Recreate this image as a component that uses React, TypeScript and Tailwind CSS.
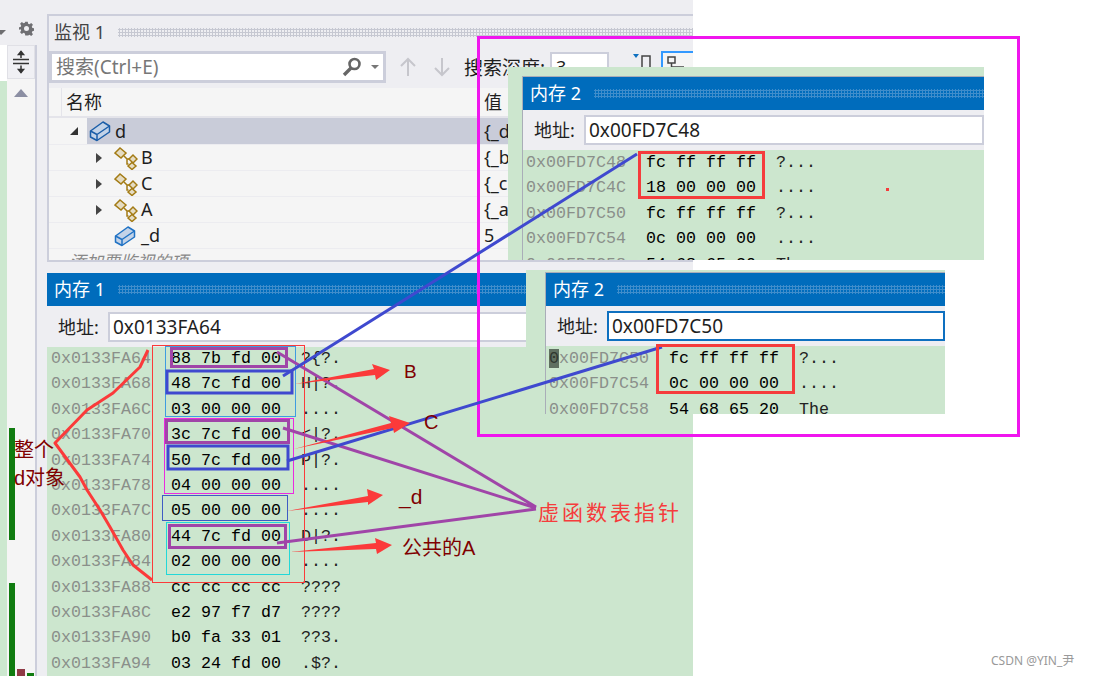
const ui = "font-['Noto_Sans','Noto_Sans_CJK_SC',sans-serif]"
const mono = "font-['Liberation_Mono','Noto_Sans_CJK_SC',monospace]"
const label = "font-['Liberation_Sans','Noto_Sans_CJK_SC',sans-serif]"

const watchRows = [
  { name: "B", value: "{_b", arrow: true },
  { name: "C", value: "{_c=", arrow: true },
  { name: "A", value: "{_a=", arrow: true },
  { name: "_d", value: "5", arrow: false },
]

const mem1 = [
  ["0x0133FA64", "88 7b fd 00", "?{?."],
  ["0x0133FA68", "48 7c fd 00", "H|?."],
  ["0x0133FA6C", "03 00 00 00", "...."],
  ["0x0133FA70", "3c 7c fd 00", "<|?."],
  ["0x0133FA74", "50 7c fd 00", "P|?."],
  ["0x0133FA78", "04 00 00 00", "...."],
  ["0x0133FA7C", "05 00 00 00", "...."],
  ["0x0133FA80", "44 7c fd 00", "D|?."],
  ["0x0133FA84", "02 00 00 00", "...."],
  ["0x0133FA88", "cc cc cc cc", "????"],
  ["0x0133FA8C", "e2 97 f7 d7", "????"],
  ["0x0133FA90", "b0 fa 33 01", "??3."],
  ["0x0133FA94", "03 24 fd 00", ".$?."],
]

const mem2a = [
  ["0x00FD7C48", "fc ff ff ff", "?..."],
  ["0x00FD7C4C", "18 00 00 00", "...."],
  ["0x00FD7C50", "fc ff ff ff", "?..."],
  ["0x00FD7C54", "0c 00 00 00", "...."],
  ["0x00FD7C58", "54 68 65 20", "The "],
]

const mem2b = [
  ["0x00FD7C50", "fc ff ff ff", "?..."],
  ["0x00FD7C54", "0c 00 00 00", "...."],
  ["0x00FD7C58", "54 68 65 20", "The "],
]

function CubeIcon({ dark }: { dark?: boolean }) {
  const stroke = dark ? "#1b5ea8" : "#1f72c4"
  return (
    <svg width="22" height="22" viewBox="0 0 22 22" fill="none" stroke={stroke} strokeWidth="1.5" strokeLinejoin="round">
      <path d="M1.5 11 L14 2 L20.5 6 L20.5 12 L8 20.5 L1.5 17 Z" fill="#c3d3e8" />
      <path d="M1.5 11 L8 14.5 L20.5 6 M8 14.5 L8 20.5" />
    </svg>
  )
}

function ClassIcon() {
  return (
    <svg width="24" height="24" viewBox="0 0 24 24" fill="#e5dcc3" stroke="#a37b14" strokeWidth="1.5">
      <path d="M10 10 L13 13 H15 M13 13 V18 H14.5" fill="none" />
      <path d="M1 7 L6 2 L12 7 L7 12 Z" />
      <path d="M15 13 L19 9 L23 13 L19 17 Z" />
      <path d="M14 20 L18 16.5 L22 20 L18 23.5 Z" />
    </svg>
  )
}

function Gripper({ dark }: { dark?: boolean }) {
  return (
    <div
      className={`h-[9px] flex-1 bg-[length:3px_3px] ${
        dark
          ? "bg-[radial-gradient(#3f8dcb_1px,transparent_1.2px)]"
          : "bg-[radial-gradient(#c6c8d2_1px,transparent_1.2px)]"
      }`}
    />
  )
}

function MemRows({ rows, mark }: { rows: string[][]; mark?: boolean }) {
  return (
    <div className={`${mono} text-[16.67px] leading-[25.4px] whitespace-pre`}>
      {rows.map((r, i) => (
        <div key={r[0]} className="flex h-[25.4px]">
          <span className="text-[#8a8f8a]">
            {mark && i === 0 ? <span className="bg-[#5f6f60] text-[#303830]">0</span> : r[0][0]}
            {r[0].slice(1)}
          </span>
          <span className="ml-[20px] text-black">{r[1]}</span>
          <span className="ml-[20px] text-[#222]">{r[2]}</span>
        </div>
      ))}
    </div>
  )
}

function AddressBar({ value, focused }: { value: string; focused?: boolean }) {
  return (
    <div className="flex h-[40px] items-center bg-[#eeeef2] pl-[11px]">
      <span className="w-[50px] text-[18px] text-[#1e1e1e]">地址:</span>
      <div
        className={`flex h-[30px] flex-1 items-center border-2 bg-white px-[3px] text-[19px] text-[#1e1e1e] ${
          focused ? "border-[#0e70c0]" : "border-[#cccedb]"
        }`}
      >
        {value}
      </div>
    </div>
  )
}

function TitleBar({ title }: { title: string }) {
  return (
    <div className="flex h-[33px] items-center gap-[13px] bg-[#006cbc] pl-[7px] text-[18px] text-white">
      <span>{title}</span>
      <Gripper dark />
    </div>
  )
}

function Annotations() {
  return (
    <svg className="absolute inset-0" width="1093" height="676" fill="none">
      {/* outer selection frame */}
      <rect x="478.5" y="37.5" width="540" height="398" stroke="#f015ee" strokeWidth="3" />

      {/* region boxes */}
      <rect x="152.5" y="345.5" width="152" height="237" stroke="#fb3a3a" />
      <rect x="165.5" y="346.5" width="130" height="70" stroke="#3f9ce0" />
      <rect x="164.5" y="418.5" width="129" height="75" stroke="#ea2be0" />
      <rect x="162.5" y="495.5" width="125" height="25" stroke="#3f5cc4" />
      <rect x="166.5" y="522.5" width="123" height="52" stroke="#22d8d8" />

      <g stroke="#a045a8" strokeWidth="3">
        <rect x="171.5" y="348.5" width="115" height="18" />
        <rect x="166.5" y="420.5" width="122" height="22" />
        <rect x="169.5" y="525.5" width="116" height="22" />
        <path d="M277 352 L536 507 M283 428 L536 508 M277 543 L536 509" />
      </g>
      <g stroke="#3f49cf" strokeWidth="3">
        <rect x="167" y="371" width="125" height="22" />
        <rect x="168" y="446" width="120" height="23" />
        <path d="M283 376 L637 154 M287 461 L662 347" />
      </g>

      {/* brace */}
      <path
        d="M148 350 L140 367 L113 393 L87 410 L55 443 L80 477 L87 490 L100 510 L110 527 L123 550 L133 565 L152 580"
        stroke="#fb3a3a"
        strokeWidth="3"
        strokeLinejoin="round"
      />

      {/* arrows */}
      <g fill="#fb3a3a">
        <path d="M295 384 L374 369 L372 364 L390 370 L376 380 L375 375 Z" />
        <path d="M294 449 L391 423 L389 416 L410 423 L394 433 L393 428 Z" />
        <path d="M287 511 L368 496 L367 489 L383 495 L368 505 L368 502 Z" />
        <path d="M290 552 L376 543 L375 538 L392 545 L377 554 L376 549 Z" />
      </g>

      {/* value boxes on the pasted windows */}
      <rect x="639.5" y="152.5" width="124" height="45" stroke="#f53c3c" strokeWidth="3" />
      <rect x="657.5" y="345.5" width="136" height="47" stroke="#f53c3c" strokeWidth="3" />
      <rect x="886" y="188" width="3" height="3" fill="#f53c3c" />
    </svg>
  )
}

export default function App() {
  return (
    <div className={`relative h-[676px] w-[1093px] overflow-hidden bg-white ${ui}`}>
      <div className="flex h-[676px] w-[693px] bg-[#eeeef2]">
        {/* left strip */}
        <div className="relative w-[47px] shrink-0">
          <span className="absolute left-[-4px] top-[30px] h-0 w-0 border-x-[5px] border-t-[5px] border-x-transparent border-t-[#6d6d70]" />
          <svg className="absolute left-[19px] top-[21px]" width="15" height="15" viewBox="0 0 24 24" fill="#6f6f73">
            <path d="M10 1h4l.6 3.2 2.2.9 2.7-1.8 2.8 2.8-1.8 2.7.9 2.2 3.2.6v4l-3.2.6-.9 2.2 1.8 2.7-2.8 2.8-2.7-1.8-2.2.9L14 23h-4l-.6-3.2-2.2-.9-2.7 1.8-2.8-2.8 1.8-2.7-.9-2.2L-.6 14v-4l3.2-.6.9-2.2L1.7 4.5l2.8-2.8 2.7 1.8 2.2-.9zM12 8a4 4 0 100 8 4 4 0 000-8z" />
          </svg>
          <div className="absolute bottom-0 left-0 top-[45px] flex w-[37px] border-r-2 border-[#cccedb]">
            <div className="flex w-[7px] flex-col">
              <div className="h-[36px] bg-white" />
              <div className="flex-1 bg-[#cce8cf]" />
            </div>
            <div className="relative flex-1 bg-[#f5f5f5]">
              <div className="flex h-[34px] items-center justify-center border border-[#e0e0e6] bg-[#f0f0f4]">
                <svg width="18" height="24" viewBox="0 0 18 24" stroke="#333" strokeWidth="1.5" fill="#333">
                  <path d="M1 9.5H17M1 13.5H17" />
                  <path d="M9 1.5V8M9 15.5V22.5" />
                  <path d="M6.5 4.5L9 1.5L11.5 4.5ZM6.5 19.5L9 22.5L11.5 19.5Z" />
                </svg>
              </div>
              <span className="absolute left-[7px] top-[44px] h-0 w-0 border-x-[7px] border-b-[8px] border-x-transparent border-b-[#8c8fa3]" />
              <div className="absolute left-[2px] top-[383px] h-[112px] w-[6px] bg-[#107c10]" />
              <div className="absolute left-[2px] top-[538px] h-[93px] w-[6px] bg-[#107c10]" />
              <div className="absolute left-[10px] top-[624px] h-[7px] w-[8px] bg-[#8f3a45]" />
              <div className="absolute left-[20px] top-[628px] h-[3px] w-[7px] bg-[#107c10]" />
            </div>
          </div>
        </div>

        <div className="flex min-w-0 flex-1 flex-col">
          {/* 监视 1 */}
          <div className="mt-[14px] h-[248px] shrink-0 overflow-hidden border-2 border-r-0 border-[#cccedb]">
            <div className="flex h-[33px] items-center gap-[13px] pl-[5px] text-[18px] text-[#444]">
              <span>监视 1</span>
              <Gripper />
            </div>
            <div className="flex h-[39px] items-start pt-[2px]">
              <div className="flex h-[32px] w-[337px] shrink-0 items-center border-[3px] border-[#cccedb] bg-white px-[4px] text-[19px] text-[#777]">
                <span className="flex-1">搜索(Ctrl+E)</span>
                <svg width="20" height="20" viewBox="0 0 20 20" fill="none" stroke="#666">
                  <circle cx="12.5" cy="7" r="5" strokeWidth="2.6" />
                  <path d="M9 11 L2 18" strokeWidth="3.4" />
                </svg>
                <span className="ml-[9px] h-0 w-0 border-x-[4px] border-t-[4px] border-x-transparent border-t-[#777]" />
              </div>
              <svg className="ml-[13px] mt-[6px] shrink-0" width="18" height="20" viewBox="0 0 18 20" fill="none" stroke="#c6c6cc" strokeWidth="2">
                <path d="M9 19V2M2 9L9 2L16 9" />
              </svg>
              <svg className="ml-[16px] mt-[6px] shrink-0" width="18" height="20" viewBox="0 0 18 20" fill="none" stroke="#c6c6cc" strokeWidth="2">
                <path d="M9 1V18M2 11L9 18L16 11" />
              </svg>
              <span className="ml-[13px] mt-[3px] w-[82px] shrink-0 whitespace-nowrap text-[19px] leading-[28px] text-[#1e1e1e]">搜索深度:</span>
              <div className="ml-[4px] mt-[1px] h-[28px] w-[59px] shrink-0 border-2 border-[#cccedb] bg-white pl-[4px] text-[18px] text-[#1e1e1e]">3</div>
              <svg className="ml-[24px] mt-[2px] shrink-0" width="19" height="22" viewBox="0 0 19 22" fill="none" stroke="#444" strokeWidth="1.5">
                <path d="M0 1H6L3 5Z" fill="#0e70c0" stroke="none" />
                <path d="M9 3H17V21H9Z" />
              </svg>
              <div className="ml-[9px] flex h-[30px] w-[40px] shrink-0 justify-start border-2 border-[#3399ff] bg-[#f5f5f5] pl-[3px] pt-[2px]">
                <svg width="20" height="20" viewBox="0 0 20 20" fill="none" stroke="#444" strokeWidth="1.5">
                  <path d="M2 2H9V8H2ZM5.5 8V18M5.5 12H18" />
                </svg>
              </div>
            </div>
            <div className="flex h-[30px] items-center border-b-2 border-[#e4e4ea] bg-[#f5f5f5] text-[18px] text-[#1e1e1e]">
              <span className="h-full w-[13px] border-r border-[#e4e4ea]" />
              <span className="w-[422px] pl-[4px]">名称</span>
              <span>值</span>
            </div>
            <div className="flex h-[26px] items-center bg-[#f5f5f5] text-[18px] text-[#1e1e1e]">
              <span className="ml-[21px] h-0 w-0 border-b-[8px] border-l-[8px] border-l-transparent border-b-[#333]" />
              <div className="ml-[9px] flex h-full flex-1 items-center gap-[4px] bg-[#c9ccd9] pl-[2px]">
                <CubeIcon dark />
                <span className="w-[365px]">d</span>
                <span>{"{_d"}</span>
              </div>
            </div>
            {watchRows.map((r) => (
              <div key={r.name} className="flex h-[26px] items-center border-t border-[#ececf0] bg-[#f5f5f5] text-[18px] text-[#1e1e1e]">
                <span className="flex w-[65px] justify-end pr-[12px]">
                  {r.arrow && (
                    <span className="h-0 w-0 border-y-[5px] border-l-[6px] border-y-transparent border-l-[#444]" />
                  )}
                </span>
                <span className="flex w-[26px] items-center">{r.arrow ? <ClassIcon /> : <CubeIcon />}</span>
                <span className="w-[344px] pl-[1px]">{r.name}</span>
                <span>{r.value}</span>
              </div>
            ))}
            <div className="h-[26px] border-t border-[#ececf0] bg-[#f5f5f5] pl-[20px] text-[17px] italic text-[#888]">
              添加要监视的项
            </div>
          </div>

          {/* 内存 1 */}
          <div className="mt-[11px] flex min-h-0 flex-1 flex-col">
            <TitleBar title="内存 1" />
            <div className="h-[1px]" />
            <AddressBar value="0x0133FA64" />
            <div className="min-h-0 flex-1 overflow-hidden bg-[#cce6ce] pl-[4px]">
              <div className="-mt-[1px]">
                <MemRows rows={mem1} />
              </div>
            </div>
          </div>
        </div>
      </div>

      {/* pasted 内存 2 */}
      <div className="absolute left-[508px] top-[67px] h-[193px] w-[476px] bg-[#cce6ce] pl-[14px] pt-[9px]">
        <div className="h-full overflow-hidden border-l border-t border-[#a9adb8]">
          <TitleBar title="内存 2" />
          <AddressBar value="0x00FD7C48" />
          <div className="pl-[3px]">
            <MemRows rows={mem2a} />
          </div>
        </div>
      </div>

      <div className="absolute left-[526px] top-[270px] h-[144px] w-[419px] bg-[#cce6ce] pl-[19px] pt-[2px]">
        <div className="h-full overflow-hidden border-l border-t border-[#a9adb8]">
          <TitleBar title="内存 2" />
          <AddressBar value="0x00FD7C50" focused />
          <div className="pl-[3px]">
            <MemRows rows={mem2b} mark />
          </div>
        </div>
      </div>

      <Annotations />

      {/* labels drawn on top of the shot */}
      <div className={`absolute left-[14px] top-[436px] text-[20px] leading-[28px] text-[#7f0000] ${label}`}>
        <div>整个</div>
        <div>d对象</div>
      </div>
      <span className={`absolute left-[404px] top-[358px] text-[19px] text-[#7f0000] ${label}`}>B</span>
      <span className={`absolute left-[424px] top-[407px] text-[20px] text-[#7f0000] ${label}`}>C</span>
      <span className={`absolute left-[399px] top-[481px] text-[21px] text-[#7f0000] ${label}`}>_d</span>
      <span className={`absolute left-[402px] top-[533px] text-[20px] text-[#7f0000] ${label}`}>公共的A</span>
      <span className="absolute left-[538px] top-[497px] text-[21px] tracking-[3px] text-[#f53c3c]">虚函数表指针</span>
      <span className="absolute left-[991px] top-[652px] text-[12px] text-[#999]">CSDN @YIN_尹</span>
    </div>
  )
}
